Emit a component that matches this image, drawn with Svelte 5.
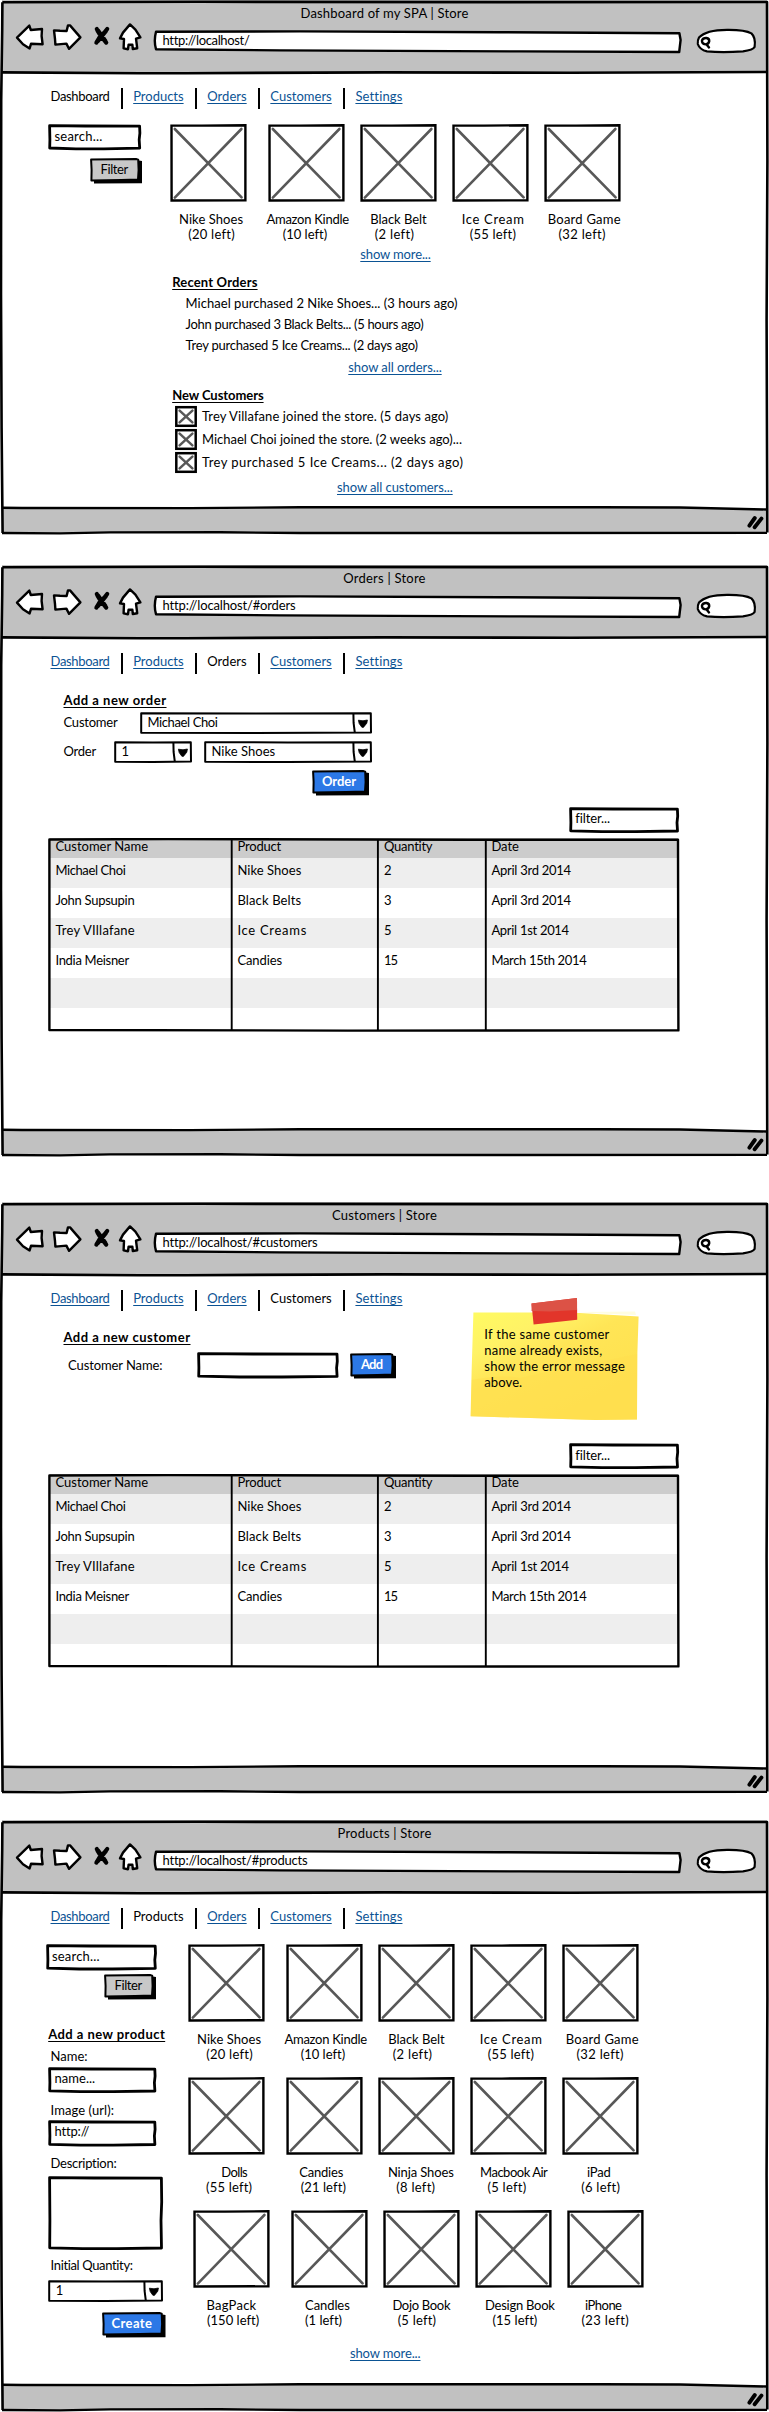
<script>
  // Tracks a label out (or in) so that it fills the width it is given.
  function fit(node, width) {
    const natural = node.getBoundingClientRect().width;
    const count = node.textContent.length;
    if (width && count) node.style.letterSpacing = (width - natural) / count + 'px';
  }

  const nav = [
    ['Dashboard', 59], ['Products', 50.4], ['Orders', 39.4], ['Customers', 61.4], ['Settings', 46.7]
  ];

  // [name, left, width, stock, left, width]; lefts are measured from the thumbnail
  const first = [
    ['Nike Shoes', 9, 64.2, '(20 left)', 18.2, 46.5],
    ['Amazon Kindle', -1.5, 82.4, '(10 left)', 14.8, 44],
    ['Black Belt', 10.3, 56.3, '(2 left)', 14.7, 39.3],
    ['Ice Cream', 9.8, 62.7, '(55 left)', 17.8, 46],
    ['Board Game', 3.8, 73, '(32 left)', 14.5, 47]
  ];
  const second = [
    ['Dolls', 33.2, 26, '(55 left)', 18, 46],
    ['Candies', 13.2, 44, '(21 left)', 14.7, 45],
    ['Ninja Shoes', 9.9, 65.8, '(8 left)', 18.3, 38.7],
    ['Macbook Air', 10.1, 67.2, '(5 left)', 17.5, 38.7],
    ['iPad', 25, 23.5, '(6 left)', 19.2, 38.7]
  ];
  const third = [
    ['BagPack', 13, 50, '(150 left)', 13.5, 52],
    ['Candles', 13.6, 44.6, '(1 left)', 13.6, 36.7],
    ['Dojo Book', 8.9, 57.8, '(5 left)', 14.2, 38.3],
    ['Design Book', 9.5, 69.7, '(15 left)', 17, 44.6],
    ['iPhone', 17.6, 36.4, '(23 left)', 14, 47.3]
  ];

  const head = [['Customer Name', 92.7], ['Product', 43.7], ['Quantity', 48.5], ['Date', 27.5]];
  const rows = [
    [['Michael Choi', 70], ['Nike Shoes', 64], ['2', 7], ['April 3rd 2014', 79.5]],
    [['John Supsupin', 79], ['Black Belts', 64], ['3', 7], ['April 3rd 2014', 79.5]],
    [['Trey VIllafane', 79.5], ['Ice Creams', 69.6], ['5', 7], ['April 1st 2014', 77.5]],
    [['India Meisner', 73.5], ['Candies', 44.6], ['15', 13], ['March 15th 2014', 95]],
    [['', 0], ['', 0], ['', 0], ['', 0]],
    [['', 0], ['', 0], ['', 0], ['', 0]]
  ];
</script>

{#snippet t(text, w, cls = '')}<span class="t {cls}" use:fit={w}>{text}</span>{/snippet}

{#snippet outline(w, h, sw = 2.8)}
  <svg class="under" viewBox="0 0 {w} {h}" preserveAspectRatio="none">
    <path
      d="M1.6 1.6 L{w * 0.4} 2 L{w - 1.6} 2.1 L{w - 1.3} {h * 0.35} L{w - 2} {h * 0.6} L{w - 1.5} {h - 2} L{w * 0.6} {h - 1.4} L{w * 0.3} {h - 1.4} L1.7 {h - 2.2} L1.9 {h * 0.6} Z"
      fill="#fff" stroke="#000" stroke-width={sw} stroke-linejoin="round" />
  </svg>
{/snippet}

{#snippet field(w, h, text, tw)}
  <div class="field" style="width:{w}px;height:{h}px">
    {@render outline(w, h)}
    {#if text}{@render t(text, tw)}{/if}
  </div>
{/snippet}

{#snippet select(w, text, tw)}
  <div class="select" style="width:{w}px">
    <svg class="under" viewBox="0 0 {w} 22">
      <path d="M1.2 1.2 L{w * 0.5} 1.4 L{w - 1.2} 1.2 L{w - 1} 20.6 L{w * 0.5} 21 L1.2 20.8 Z" fill="#fff" stroke="#000" stroke-width="2" stroke-linejoin="round" />
      <path d="M{w - 18.6} 1.5 L{w - 18.4} 11 L{w - 17.2} 20.5" fill="none" stroke="#000" stroke-width="2" />
      <path d="M{w - 13.6} 8.2 L{w - 9} 8.8 L{w - 4.6} 8 L{w - 5.2} 11.2 L{w - 8.6} 15.4 L{w - 10.2} 15.2 L{w - 12.8} 11.6 Z" fill="#000" stroke="#000" stroke-width="0.8" stroke-linejoin="round" />
    </svg>
    {@render t(text, tw)}
  </div>
{/snippet}

{#snippet button(w, text, tw, primary = false)}
  <div class="button" class:primary style="width:{w}px">
    <svg class="under" viewBox="0 0 {w} 25.5">
      <path d="M4 4 L{w - 3} 2.6 L{w} 3 L{w} 25.3 L4 25.5 Z" fill="#000" />
      <path d="M1.1 1.6 L{w - 6} 1 L{w - 3.8} 1.6 L{w - 3.4} 12 L{w - 4} 21.6 L{w * 0.6} 22 L1.4 22.6 L1.6 12 Z" fill={primary ? '#2c78e6' : '#c8c8c8'} stroke="#000" stroke-width="2" stroke-linejoin="round" />
    </svg>
    {@render t(text, tw)}
  </div>
{/snippet}

{#snippet chrome(title, tw, url, uw)}
  <header>
    <div class="title">{@render t(title, tw)}</div>
    <div class="tools">
      <svg width="30" height="28" viewBox="15 23 30 28"><path class="ico" d="M17 37.6 L29.3 25.6 L30.8 30 L42 29 L41.6 36 L42.6 44.2 L31 43.8 L29.6 48.4 L23 44.2 Z" /></svg>
      <svg width="30" height="28" viewBox="52 23 30 28"><path class="ico" d="M54 30.4 L60 30.8 L66.6 31 L68 25.4 L70 25.4 L80.4 37.4 L69 48.8 L66.4 43.6 L55.4 44.6 L55 39 Z" /></svg>
      <svg width="18" height="28" viewBox="93 23 18 28"><path d="M96.8 29 Q98 33 106.2 42.6 M107.2 29 L104 33 Q99 37 96.4 42.6 M98 30.4 L105.4 41 M106 31 L98 41" fill="none" stroke="#000" stroke-width="4.2" stroke-linecap="round" /></svg>
      <svg width="25" height="28" viewBox="118 23 25 28"><path class="ico" d="M130 24.4 L135.4 29.6 L140.4 37.4 L136 38.6 L137.2 48.2 L132.8 49 L132.4 44.8 L128.6 44.6 L128 49.2 L123.6 48.4 L124 39 L120 38.4 L123 32.6 Z" /></svg>
      <div class="url">
        <svg class="under" viewBox="153 29 530 26"><path d="M156 31.8 L300 31.4 L500 32.2 L679.4 33.2 L680.6 40 L679.2 52 L520 51.4 L280 50.4 L156 49.2 Q153.6 41 156 31.8 Z" fill="#fff" stroke="#000" stroke-width="2.4" stroke-linejoin="round" /></svg>
        {@render t(url, uw)}
      </div>
      <svg class="find" width="62" height="28" viewBox="695 27 62 28">
        <path d="M699 37.6 Q706 29.8 727 29.8 Q745 29.6 751.4 33.4 Q756 37.6 754.6 47 Q753 50 743 51.4 Q722 53 707 51.4 Q699.6 49.6 697.8 44 Q697.4 40.6 699 37.6 Z" fill="#fff" stroke="#000" stroke-width="2.2" />
        <path d="M702 40.4 Q703 37.8 706.4 38 Q709.6 38.6 709.2 41.4 Q708.4 44.4 705.4 44.4 Q701.6 43.8 702 40.4 Z M706.6 44.4 L709 47.4" fill="none" stroke="#000" stroke-width="2.4" stroke-linecap="round" />
      </svg>
    </div>
    <svg class="rule" viewBox="0 0 769 5"><path d="M2 2.4 L140 3.2 L185 3.2 L384 2.4 L570 2.8 L767 2" fill="none" stroke="#000" stroke-width="2.6" /></svg>
  </header>
{/snippet}

{#snippet menu(active)}
  <nav>
    {#each nav as [name, w], i}
      {#if i}<i class="sep"></i>{/if}
      <span class="entry" style="width:{w}px">{@render t(name, w, name === active ? '' : 'link')}</span>
    {/each}
  </nav>
{/snippet}

{#snippet edges(h)}
  <svg class="edges" viewBox="0 0 769 {h}">
    <path d="M2.4 2.2 L200 1.8 L500 2.1 L767 2 L767.4 {h * 0.3} L766.6 {h * 0.6} L767.3 {h - 2.5} M2.4 2.2 L2.2 30 L1.2 100 L1 {h * 0.55} L1.6 {h * 0.8} L2.6 {h - 2}" fill="none" stroke="#000" stroke-width="2.6" stroke-linejoin="round" />
  </svg>
{/snippet}

{#snippet base()}
  <footer>
    <svg viewBox="0 0 769 28">
      <path d="M2 0.7 L22 1 L190 1.1 L300 0.3 L600 0.2 L680 0.5 L767 2.5 V25.6 H300 L2 25.8 Z" fill="#c1c1c1" />
      <path d="M2 0.7 L22 1 L190 1.1 L300 0.3 L600 0.2 L680 0.5 L767 2.5 M2 26 L60 26.4 L110 25.4 L220 25.3 L300 26 L767 25.9" fill="none" stroke="#000" stroke-width="2.4" />
      <path d="M749.4 18.6 L754.8 11 M754.6 20.2 L761.4 11.6" stroke="#000" stroke-width="3.9" stroke-linecap="round" />
    </svg>
  </footer>
{/snippet}

{#snippet thumb()}
  <svg class="thumb" width="76.7" height="77.7" viewBox="0 0 76.7 77.7">
    <path d="M1.5 1.6 L32 1.6 L75.4 1.3 L75.4 76.3 L1.6 76.5 Z" fill="#fff" stroke="#000" stroke-width="2.4" />
    <path d="M4.8 5 L71.6 73.4 M71.4 5 L4.8 73.6" stroke="#585858" stroke-width="2.6" stroke-linecap="round" />
  </svg>
{/snippet}

{#snippet shelf(items)}
  <div class="shelf">
    {#each items as [name, nx, nw, stock, sx, sw]}
      <div class="product">
        {@render thumb()}
        <div class="line" style="margin-left:{nx}px">{@render t(name, nw)}</div>
        <div class="line" style="margin-left:{sx}px">{@render t(stock, sw)}</div>
      </div>
    {/each}
  </div>
{/snippet}

{#snippet avatar()}
  <svg width="22" height="21" viewBox="0 0 22 21">
    <rect x="1.3" y="1.2" width="19.4" height="18.6" fill="#fff" stroke="#000" stroke-width="2.5" />
    <path d="M4.6 4.6 L17.4 16.4 M17.4 4.6 L4.6 16.4" stroke="#585858" stroke-width="2.5" stroke-linecap="round" />
  </svg>
{/snippet}

{#snippet grid()}
  <div class="table">
    <svg class="over" viewBox="0 0 631.5 194">
      <path d="M1.4 1.5 L120 1 L420 1.8 L630 1.8 L630.4 192.4 L300 192.6 L1.4 192 Z" fill="none" stroke="#000" stroke-width="2.4" stroke-linejoin="round" />
      <path d="M183.7 2 V192.5 M329.9 2 V192.5 M437.8 2 V192.5" stroke="#000" stroke-width="1.9" />
    </svg>
    <div class="tr th">{#each head as [c, w]}<div>{@render t(c, w)}</div>{/each}</div>
    {#each rows as row}
      <div class="tr">{#each row as [c, w]}<div>{#if c}{@render t(c, w)}{/if}</div>{/each}</div>
    {/each}
  </div>
{/snippet}

<main>
  <section class="window dash">
    {@render edges(535)}
    {@render chrome('Dashboard of my SPA | Store', 168, 'http://localhost/', 86.5)}
    {@render menu('Dashboard')}
    <div class="cols">
      <aside>
        {@render field(93.2, 26.2, 'search...', 48)}
        <div class="b1">{@render button(52, 'Filter', 27.5)}</div>
      </aside>
      <div class="feed">
        {@render shelf(first)}
        <div class="more">{@render t('show more...', 70.4, 'link')}</div>
        <div class="h recent">{@render t('Recent Orders', 85.4, 'bold')}</div>
        <div class="orders">
          {@render t('Michael purchased 2 Nike Shoes... (3 hours ago)', 272)}
          {@render t('John purchased 3 Black Belts... (5 hours ago)', 258)}
          {@render t('Trey purchased 5 Ice Creams... (2 days ago)', 262)}
        </div>
        <div class="allorders">{@render t('show all orders...', 93.4, 'link')}</div>
        <div class="h newc">{@render t('New Customers', 91.4, 'bold')}</div>
        <div class="people">
          <div>{@render avatar()}{@render t('Trey Villafane joined the store. (5 days ago)', 246.4)}</div>
          <div>{@render avatar()}{@render t('Michael Choi joined the store. (2 weeks ago)...', 260)}</div>
          <div>{@render avatar()}{@render t('Trey purchased 5 Ice Creams... (2 days ago)', 261.4)}</div>
        </div>
        <div class="allcust">{@render t('show all customers...', 115.7, 'link')}</div>
      </div>
    </div>
    {@render base()}
  </section>

  <section class="window ord">
    {@render edges(592)}
    {@render chrome('Orders | Store', 82.4, 'http://localhost/#orders', 132.5)}
    {@render menu('Orders')}
    <div class="oform">
      <div class="h">{@render t('Add a new order', 103, 'bold')}</div>
      <div class="orow"><span class="lab">{@render t('Customer', 54)}</span>{@render select(232, 'Michael Choi', 70)}</div>
      <div class="orow two"><span class="lab">{@render t('Order', 32.4)}</span>{@render select(78, '1', 6)}{@render select(168, 'Nike Shoes', 63.7)}</div>
      <div class="obtn">{@render button(57, 'Order', 34, true)}</div>
    </div>
    <div class="filter">{@render field(110, 26, 'filter...', 34.3)}</div>
    {@render grid()}
    {@render base()}
  </section>

  <section class="window cust">
    {@render edges(592)}
    {@render chrome('Customers | Store', 105, 'http://localhost/#customers', 154.5)}
    {@render menu('Customers')}
    <div class="crow">
      <div class="cform">
        <div class="h">{@render t('Add a new customer', 127, 'bold')}</div>
        <div class="cline">
          <span class="clab">{@render t('Customer Name:', 94.5)}</span>
          {@render field(141.6, 26.4, '', 0)}
          {@render button(46, 'Add', 21.4, true)}
        </div>
      </div>
      <div class="note">
        <svg class="under" viewBox="470 95 170 125">
          <defs>
            <linearGradient id="paper" x1="0" y1="0" x2="0.65" y2="0.85">
              <stop offset="0" stop-color="#fffb62" /><stop offset="0.3" stop-color="#fff266" /><stop offset="0.55" stop-color="#ffe556" /><stop offset="1" stop-color="#ffe14f" />
            </linearGradient>
          </defs>
          <path d="M473.4 110.4 L534 110.6 L580 111 L638.6 114.6 L637.4 150 L637 217.6 L595 218 L530 216 L470.6 214.2 L471.6 170 Z" fill="url(#paper)" />
          <path d="M578 110 L635 109.6 L636 113 L600 111.6 Z" fill="#fffde0" />
          <path d="M471.8 178 Q500 172 520 176 Q560 166 600 160 L637 152 L637 217.6 L595 218 L470.8 214.2 Z" fill="#ffdf4e" opacity="0.55" />
          <path d="M531.5 101.4 L577 96 L577.2 117.8 L533.6 122.6 Z" fill="#e2352a" />
          <path d="M531.5 101.4 L577 96 L577 108 L550 109.4 L531.6 109 Z" fill="#dc5246" />
        </svg>
        {@render t('If the same customer', 125.3)}
        {@render t('name already exists,', 118)}
        {@render t('show the error message', 140.7)}
        {@render t('above.', 38)}
      </div>
    </div>
    <div class="filter">{@render field(110, 26, 'filter...', 34.3)}</div>
    {@render grid()}
    {@render base()}
  </section>

  <section class="window prod">
    {@render edges(592)}
    {@render chrome('Products | Store', 94, 'http://localhost/#products', 144.5)}
    {@render menu('Products')}
    <div class="cols">
      <aside>
        <div class="wide">{@render field(110.8, 26.4, 'search...', 47.8)}</div>
        <div class="b2">{@render button(52, 'Filter', 27.5)}</div>
        <div class="h addp">{@render t('Add a new product', 117, 'bold')}</div>
        <div class="fl n1">{@render t('Name:', 37)}</div>
        {@render field(108.4, 26, 'name...', 40.7)}
        <div class="fl n2">{@render t('Image (url):', 63.5)}</div>
        {@render field(108.4, 26.5, 'http://', 34.3)}
        <div class="fl n3">{@render t('Description:', 66)}</div>
        {@render field(115, 74, '', 0)}
        <div class="fl n4">{@render t('Initial Quantity:', 82.5)}</div>
        {@render select(115, '1', 6)}
        <div class="b3">{@render button(63.5, 'Create', 41, true)}</div>
      </aside>
      <div class="stock">
        {@render shelf(first)}
        {@render shelf(second)}
        <div class="shift">{@render shelf(third)}</div>
        <div class="more4">{@render t('show more...', 70.5, 'link')}</div>
      </div>
    </div>
    {@render base()}
  </section>
</main>

<style>
  :global(body) { margin: 0; background: #fff; }
  main { width: 769px; height: 2412px; overflow: hidden; font: 13px/16px Lato, "Open Sans", sans-serif; color: #000; background: #fff; }
  svg { display: block; flex: none; overflow: visible; }
  .t { display: inline-block; white-space: pre; flex: none; font-kerning: normal; }
  .link { color: #0b5394; text-decoration: underline; text-decoration-thickness: 1px; text-underline-offset: 2px; text-decoration-skip-ink: none; }
  .bold { font-weight: 700; text-decoration: underline; text-decoration-thickness: 1px; text-underline-offset: 2px; text-decoration-skip-ink: none; }
  .under, .over, .edges { position: absolute; left: 0; top: 0; width: 100%; height: 100%; }
  .under ~ .t { position: relative; }
  .over { z-index: 1; }
  .edges { z-index: 2; pointer-events: none; }

  .window { position: relative; display: flex; flex-direction: column; height: 592px; box-sizing: border-box; }
  .dash { height: 535px; margin-bottom: 30px; }
  .ord { margin-bottom: 45px; }
  .cust { margin-bottom: 26px; }

  header { height: 73px; margin: 0 2px; background: #c1c1c1; flex: none; display: flex; flex-direction: column; }
  .title { text-align: center; padding-top: 5px; height: 16px; }
  .tools { display: flex; align-items: flex-start; height: 28px; padding: 2px 0 0 13px; }
  .tools > svg:nth-child(2) { margin-left: 7px; }
  .tools > svg:nth-child(3) { margin-left: 11px; }
  .tools > svg:nth-child(4) { margin-left: 7px; }
  .url { position: relative; width: 530px; height: 26px; margin: 6px 0 0 10px; box-sizing: border-box; padding: 3px 0 0 9.5px; flex: none; }
  .tools > .find { margin: 4px 0 0 12px; }
  .ico { fill: #fff; stroke: #000; stroke-width: 2.4; stroke-linejoin: round; }
  .rule { width: 769px; height: 5px; margin: 19px 0 0 -2px; }

  nav { display: flex; align-items: flex-start; height: 21px; margin-top: 15px; padding-left: 50.5px; flex: none; }
  .entry { flex: none; white-space: nowrap; }
  .sep { width: 2px; height: 21px; background: #000; margin: 0 10.3px 0 11.4px; flex: none; }

  .cols { display: flex; margin-top: 15.3px; padding-left: 48.2px; align-items: flex-start; flex: none; }
  aside { width: 121.8px; flex: none; display: flex; flex-direction: column; }
  .field { position: relative; box-sizing: border-box; padding: 3.4px 0 0 6.3px; flex: none; }
  .select { position: relative; height: 22px; box-sizing: border-box; padding: 2px 0 0 7.5px; flex: none; }
  .button { position: relative; height: 25.5px; box-sizing: border-box; padding: 3px 3px 0 0; text-align: center; flex: none; }
  .primary .t { color: #fff; font-weight: 700; }
  .b1 { margin: 7.5px 0 0 41.5px; }

  .shelf { display: grid; grid-template-columns: 98px 92px 92px 92px 77px; }
  .product { display: flex; flex-direction: column; padding-bottom: 15.1px; }
  .thumb { margin-bottom: 10.2px; }
  .line { line-height: 15px; height: 15px; white-space: nowrap; }
  .feed { display: flex; flex-direction: column; align-items: flex-start; }
  .more { margin: -11.6px 0 0 190.3px; }
  .recent { margin: 12.3px 0 0 2.2px; }
  .orders { display: flex; flex-direction: column; gap: 5px; margin: 5px 0 0 15.6px; }
  .allorders { margin: 6px 0 0 178.3px; }
  .newc { margin: 12px 0 0 2.2px; }
  .people { margin: 3px 0 0 5px; }
  .people div { display: flex; gap: 5px; height: 23px; align-items: flex-start; }
  .people .t { margin-top: 2px; }
  .allcust { margin: 4px 0 0 167px; }

  .oform { margin: 17.7px 0 0 63.5px; flex: none; }
  .orow { display: flex; margin-top: 4px; align-items: flex-start; }
  .lab { width: 76.5px; padding-top: 2px; flex: none; }
  .two { margin-top: 7px; }
  .two .lab { width: 50.5px; }
  .two .select + :global(.select) { margin-left: 12px; }
  .obtn { margin: 7px 0 0 248.5px; }
  .filter { margin: 11.6px 0 0 569px; flex: none; }

  .table { position: relative; margin: 5px 0 0 48px; width: 631.5px; height: 194px; overflow: hidden; flex: none; }
  .tr { display: grid; grid-template-columns: 182px 146.6px 107.4px 1fr; height: 30px; margin: 0 1.5px 0 2px; padding-left: 5.4px; }
  .tr > div { padding-top: 4.5px; white-space: nowrap; }
  .tr:nth-child(odd) { background: #eee; }
  .tr:nth-child(even) { background: #fff; }
  .th.tr { height: 20px; background: #ccc; }
  .th > div { padding-top: 0.5px; }
  .cust .tr > div { padding-top: 4px; }
  .cust .th > div { padding-top: 0; }

  .crow { display: flex; height: 120.6px; padding-left: 63.5px; flex: none; }
  .cform { width: 406px; flex: none; padding-top: 17.7px; }
  .cline { display: flex; margin-top: 7.3px; align-items: flex-start; }
  .clab { width: 129px; padding: 4.7px 0 0 4.5px; box-sizing: border-box; flex: none; }
  .cline > :global(.field) { margin-left: 4.5px; }
  .cline .button { margin: 1px 0 0 11.5px; }
  .note { position: relative; width: 170px; height: 125px; margin-top: -14px; padding: 28.7px 0 0 14.8px; box-sizing: border-box; display: flex; flex-direction: column; align-items: flex-start; }

  .prod aside { width: 139.8px; }
  .wide { margin-left: -2.5px; }
  .b2 { margin: 3.5px 0 0 55.5px; }
  .addp { margin: 26.4px 0 0 0; }
  .fl { padding-left: 2.4px; }
  .n1 { margin: 6px 0 2.5px; }
  .n2 { margin: 9.5px 0 2px; }
  .n3 { margin: 8.5px 0 4.7px; }
  .n4 { margin: 7px 0 7.6px; }
  .b3 { margin: 9.3px 0 0 53.5px; }
  .shift { margin-left: 5.5px; }
  .more4 { margin: 2px 0 0 162px; }

  footer { margin-top: auto; height: 28px; flex: none; }
  footer svg { width: 769px; height: 28px; }
</style>
